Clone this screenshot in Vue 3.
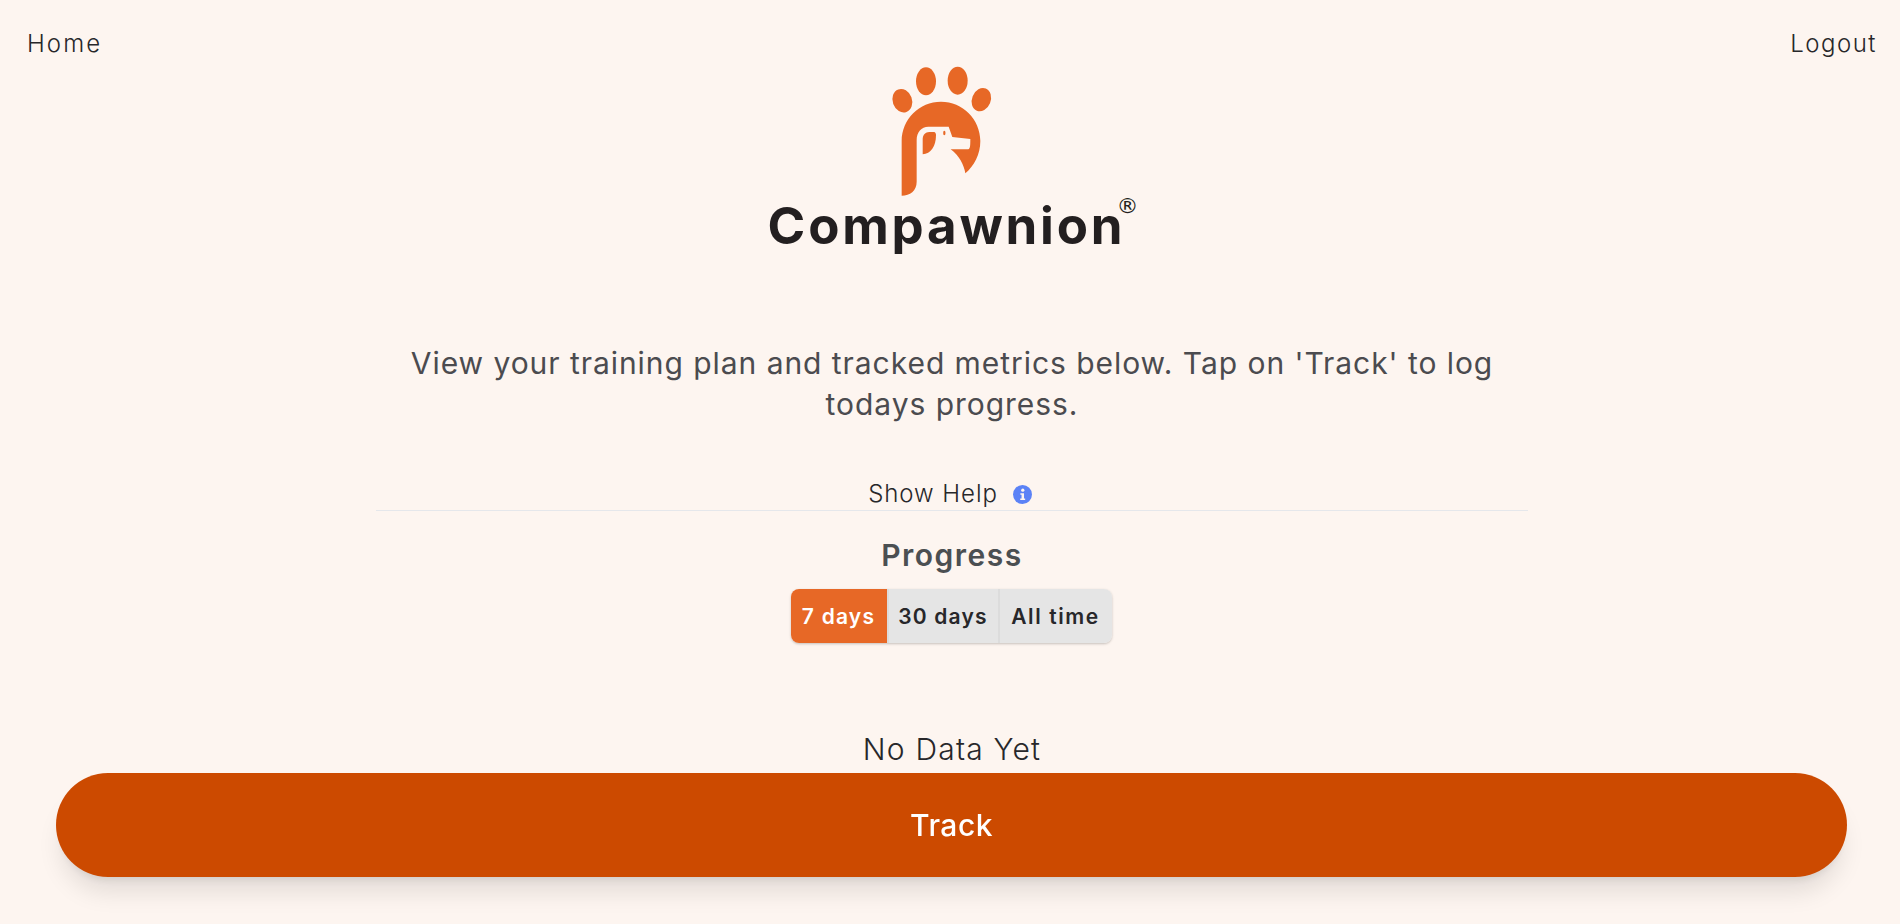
<script setup>
const ranges = [
  { label: '7 days', active: true },
  { label: '30 days', active: false },
  { label: 'All time', active: false },
]
</script>

<template>
  <div class="page">
    <nav class="nav">
      <a class="nav-link">Home</a>
      <a class="nav-link">Logout</a>
    </nav>

    <div class="logo">
      <svg class="mark" viewBox="0 0 450 420" aria-hidden="true">
        <ellipse cx="127" cy="122" rx="29" ry="36" transform="rotate(-20 127 122)" fill="#e76826" />
        <ellipse cx="198" cy="64" rx="30" ry="42" fill="#e76826" />
        <ellipse cx="293" cy="62" rx="30" ry="42" fill="#e76826" />
        <ellipse cx="364" cy="119" rx="28" ry="36" transform="rotate(22 364 119)" fill="#e76826" />
        <path fill="#e76826" d="M125 407 V243 C125 178 178 125 243 125 C308 125 361 178 361 243 C361 283 342 318 316 340 C312 315 298 287 272 268 H322 C330 268 331 262 331 237 L277 231 L266 200 H205 C184 200 170 217 170 240 V365 C170 392 150 407 125 407 Z" />
        <path fill="#e76826" d="M188 238 C188 225 196 216 208 216 H222 C226 216 228 220 228 226 C228 258 212 283 188 283 Z" />
        <ellipse cx="253" cy="219" rx="3.5" ry="7" fill="#e76826" />
      </svg>
      <div class="wordmark">Compawnion<span class="reg">®</span></div>
    </div>

    <main class="main">
      <p class="intro">View your training plan and tracked metrics below. Tap on 'Track' to log todays progress.</p>

      <div class="help">
        <span>Show Help</span>
        <svg class="info" viewBox="0 0 20 20" aria-hidden="true">
          <circle cx="10" cy="10" r="10" fill="#5b82f6" />
          <circle cx="10.3" cy="5.4" r="1.7" fill="#fdf5f0" />
          <path d="M7.8 8.6 H11.6 V14.2 H12.8 V15.8 H7.6 V14.2 H9 V10.2 H7.8 Z" fill="#fdf5f0" />
        </svg>
      </div>

      <h2 class="title">Progress</h2>

      <div class="segments">
        <button
          v-for="r in ranges"
          :key="r.label"
          class="segment"
          :class="{ active: r.active }"
        >{{ r.label }}</button>
      </div>

      <p class="empty">No Data Yet</p>
    </main>

    <button class="track">Track</button>
  </div>
</template>

<style>
html, body { margin: 0; background: #fdf5f0; }
</style>

<style scoped>
.page {
  height: 924px;
  overflow: hidden;
  background: #fdf5f0;
  font-family: Inter, "Open Sans", "Liberation Sans", sans-serif;
  box-sizing: border-box;
  padding-left: 4px;
}
.nav {
  display: flex;
  justify-content: space-between;
  padding: 29px 23px 0 23px;
  height: 60px;
  box-sizing: border-box;
}
.nav-link {
  font-size: 24px;
  line-height: 30px;
  font-weight: 300;
  color: #27272a;
  letter-spacing: 1.5px;
}
.nav-link:first-child {
  letter-spacing: 2.1px;
}
.logo {
  display: flex;
  flex-direction: column;
  align-items: center;
  height: 200px;
}
.mark {
  width: 150px;
  height: 140px;
  margin-left: -34px;
  flex: none;
}
.wordmark {
  position: relative;
  margin-top: -4px;
  margin-left: -11px;
  font-size: 51px;
  line-height: 60px;
  font-weight: 700;
  color: #231f20;
  letter-spacing: 2.8px;
}
.reg {
  position: absolute;
  right: -13px;
  top: -2px;
  font-family: "DejaVu Sans", sans-serif;
  font-size: 22px;
  line-height: 24px;
  font-weight: 400;
  letter-spacing: 0;
}
.main {
  width: 1152px;
  margin: 0 auto;
  display: flex;
  flex-direction: column;
  align-items: center;
}
.intro {
  margin: 83px 0 0;
  width: 1120px;
  text-align: center;
  font-size: 30px;
  line-height: 41px;
  font-weight: 400;
  letter-spacing: 0.95px;
  color: #4b4b4f;
}
.help {
  align-self: stretch;
  margin-top: 51px;
  display: flex;
  justify-content: center;
  align-items: center;
  gap: 15px;
  height: 34px;
  padding-right: 4px;
  border-bottom: 1px solid #e5e7eb;
  font-size: 24px;
  font-weight: 300;
  letter-spacing: 0.95px;
  color: #27272a;
}
.info {
  width: 19px;
  height: 19px;
  margin-top: 3px;
}
.title {
  margin: 26px 0 0;
  font-size: 30px;
  line-height: 36px;
  font-weight: 600;
  letter-spacing: 1.5px;
  color: #4b4f52;
}
.segments {
  display: grid;
  grid-template-columns: 96px 111px 114px;
  margin-top: 16px;
  margin-left: -2px;
  height: 54px;
  border-radius: 8px;
  overflow: hidden;
  box-shadow: 0 1px 3px rgba(0, 0, 0, 0.15), 0 1px 2px rgba(0, 0, 0, 0.08);
}
.segment {
  border: 0;
  padding: 0;
  font: inherit;
  font-size: 21px;
  font-weight: 600;
  letter-spacing: 1.2px;
  color: #27272a;
  background: #e5e5e5;
  border-left: 2px solid #dcdcdc;
}
.segment.active {
  background: #e76826;
  color: #fff;
  border-left: 0;
}
.segment:last-child {
  letter-spacing: 1.6px;
}
.empty {
  margin: 88px 0 0;
  font-size: 30px;
  line-height: 36px;
  font-weight: 300;
  letter-spacing: 1.2px;
  color: #27272a;
}
.track {
  position: fixed;
  left: 56px;
  right: 53px;
  top: 773px;
  height: 104px;
  border: 0;
  border-radius: 52px;
  background: #cc4a00;
  color: #fff;
  font: inherit;
  font-size: 30px;
  font-weight: 500;
  letter-spacing: 0.5px;
  box-shadow: 0 20px 25px -5px rgba(0, 0, 0, 0.1), 0 8px 10px -6px rgba(0, 0, 0, 0.1);
}
</style>
